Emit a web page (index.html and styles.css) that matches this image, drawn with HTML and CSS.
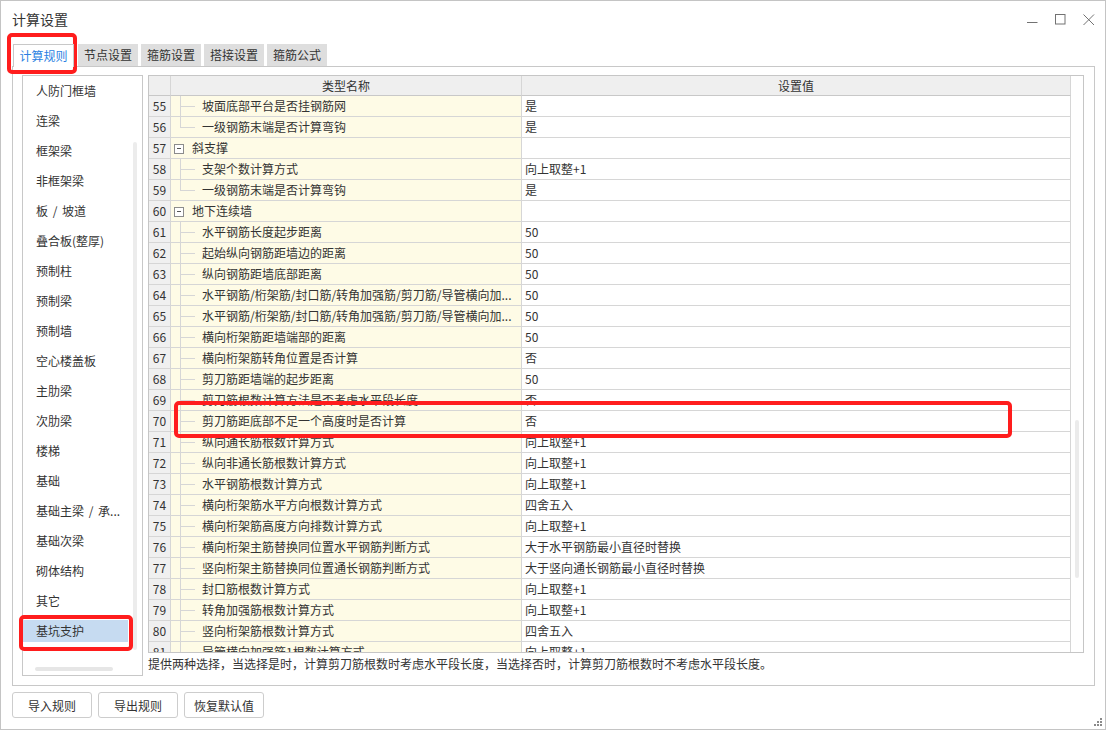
FILE: index.html
```html
<!DOCTYPE html>
<html lang="zh-CN">
<head>
<meta charset="utf-8">
<title>计算设置</title>
<link rel="stylesheet" href="styles.css">
</head>
<body>
<div class="window">
  <div class="titlebar">
    <span class="title">计算设置</span>
    <div class="controls">
      <svg class="ctl" width="12" height="12" viewBox="0 0 12 12"><path d="M0 8.5H10.5"/></svg>
      <svg class="ctl" width="12" height="12" viewBox="0 0 12 12"><rect x="0.5" y="0.5" width="9.5" height="9.5"/></svg>
      <svg class="ctl" width="12" height="12" viewBox="0 0 12 12"><path d="M0.5 0.5L11 11M11 0.5L0.5 11"/></svg>
    </div>
  </div>

  <div class="tabs">
    <div class="tab active">计算规则</div>
    <div class="tab">节点设置</div>
    <div class="tab">箍筋设置</div>
    <div class="tab">搭接设置</div>
    <div class="tab">箍筋公式</div>
  </div>

  <div class="panel">
    <div class="list">
      <div class="list-items">
        <div class="item">人防门框墙</div>
        <div class="item">连梁</div>
        <div class="item">框架梁</div>
        <div class="item">非框架梁</div>
        <div class="item">板 / 坡道</div>
        <div class="item">叠合板(整厚)</div>
        <div class="item">预制柱</div>
        <div class="item">预制梁</div>
        <div class="item">预制墙</div>
        <div class="item">空心楼盖板</div>
        <div class="item">主肋梁</div>
        <div class="item">次肋梁</div>
        <div class="item">楼梯</div>
        <div class="item">基础</div>
        <div class="item">基础主梁 / 承...</div>
        <div class="item">基础次梁</div>
        <div class="item">砌体结构</div>
        <div class="item">其它</div>
        <div class="item selected">基坑支护</div>
      </div>
      <div class="list-vthumb"></div>
      <div class="list-hthumb"></div>
    </div>

    <div class="right">
      <div class="grid">
        <div class="grid-body">
          <div class="row head">
            <div class="cell num"></div>
            <div class="cell name">类型名称</div>
            <div class="cell val">设置值</div>
          </div>
          <div class="row"><div class="cell num">55</div><div class="cell name c">坡面底部平台是否挂钢筋网</div><div class="cell val">是</div></div>
          <div class="row"><div class="cell num">56</div><div class="cell name l">一级钢筋末端是否计算弯钩</div><div class="cell val">是</div></div>
          <div class="row"><div class="cell num">57</div><div class="cell name g"><span class="box"></span>斜支撑</div><div class="cell val"></div></div>
          <div class="row"><div class="cell num">58</div><div class="cell name c">支架个数计算方式</div><div class="cell val">向上取整+1</div></div>
          <div class="row"><div class="cell num">59</div><div class="cell name l">一级钢筋末端是否计算弯钩</div><div class="cell val">是</div></div>
          <div class="row"><div class="cell num">60</div><div class="cell name g"><span class="box"></span>地下连续墙</div><div class="cell val"></div></div>
          <div class="row"><div class="cell num">61</div><div class="cell name c">水平钢筋长度起步距离</div><div class="cell val">50</div></div>
          <div class="row"><div class="cell num">62</div><div class="cell name c">起始纵向钢筋距墙边的距离</div><div class="cell val">50</div></div>
          <div class="row"><div class="cell num">63</div><div class="cell name c">纵向钢筋距墙底部距离</div><div class="cell val">50</div></div>
          <div class="row"><div class="cell num">64</div><div class="cell name c">水平钢筋/桁架筋/封口筋/转角加强筋/剪刀筋/导管横向加...</div><div class="cell val">50</div></div>
          <div class="row"><div class="cell num">65</div><div class="cell name c">水平钢筋/桁架筋/封口筋/转角加强筋/剪刀筋/导管横向加...</div><div class="cell val">50</div></div>
          <div class="row"><div class="cell num">66</div><div class="cell name c">横向桁架筋距墙端部的距离</div><div class="cell val">50</div></div>
          <div class="row"><div class="cell num">67</div><div class="cell name c">横向桁架筋转角位置是否计算</div><div class="cell val">否</div></div>
          <div class="row"><div class="cell num">68</div><div class="cell name c">剪刀筋距墙端的起步距离</div><div class="cell val">50</div></div>
          <div class="row"><div class="cell num">69</div><div class="cell name c">剪刀筋根数计算方法是否考虑水平段长度</div><div class="cell val">否</div></div>
          <div class="row"><div class="cell num">70</div><div class="cell name c">剪刀筋距底部不足一个高度时是否计算</div><div class="cell val">否</div></div>
          <div class="row"><div class="cell num">71</div><div class="cell name c">纵向通长筋根数计算方式</div><div class="cell val">向上取整+1</div></div>
          <div class="row"><div class="cell num">72</div><div class="cell name c">纵向非通长筋根数计算方式</div><div class="cell val">向上取整+1</div></div>
          <div class="row"><div class="cell num">73</div><div class="cell name c">水平钢筋根数计算方式</div><div class="cell val">向上取整+1</div></div>
          <div class="row"><div class="cell num">74</div><div class="cell name c">横向桁架筋水平方向根数计算方式</div><div class="cell val">四舍五入</div></div>
          <div class="row"><div class="cell num">75</div><div class="cell name c">横向桁架筋高度方向排数计算方式</div><div class="cell val">向上取整+1</div></div>
          <div class="row"><div class="cell num">76</div><div class="cell name c">横向桁架主筋替换同位置水平钢筋判断方式</div><div class="cell val">大于水平钢筋最小直径时替换</div></div>
          <div class="row"><div class="cell num">77</div><div class="cell name c">竖向桁架主筋替换同位置通长钢筋判断方式</div><div class="cell val">大于竖向通长钢筋最小直径时替换</div></div>
          <div class="row"><div class="cell num">78</div><div class="cell name c">封口筋根数计算方式</div><div class="cell val">向上取整+1</div></div>
          <div class="row"><div class="cell num">79</div><div class="cell name c">转角加强筋根数计算方式</div><div class="cell val">向上取整+1</div></div>
          <div class="row"><div class="cell num">80</div><div class="cell name c">竖向桁架筋根数计算方式</div><div class="cell val">四舍五入</div></div>
          <div class="row"><div class="cell num">81</div><div class="cell name c">导管横向加强筋1根数计算方式</div><div class="cell val">向上取整+1</div></div>
        </div>
        <div class="vscroll"><div class="vscroll-thumb"></div></div>
      </div>
      <div class="desc">提供两种选择，当选择是时，计算剪刀筋根数时考虑水平段长度，当选择否时，计算剪刀筋根数时不考虑水平段长度。</div>
    </div>
  </div>

  <div class="buttons">
    <button class="btn">导入规则</button>
    <button class="btn">导出规则</button>
    <button class="btn">恢复默认值</button>
  </div>

  <svg class="grip" width="8" height="8" viewBox="0 0 8 8">
    <rect x="6" y="0" width="2" height="2"/>
    <rect x="3" y="3" width="2" height="2"/>
    <rect x="6" y="3" width="2" height="2"/>
    <rect x="0" y="6" width="2" height="2"/>
    <rect x="3" y="6" width="2" height="2"/>
    <rect x="6" y="6" width="2" height="2"/>
  </svg>

  <div class="mark mark-tab"></div>
  <div class="mark mark-item"></div>
  <div class="mark mark-row"></div>
</div>
</body>
</html>
```

FILE: styles.css
```css
* { box-sizing: border-box; }

html, body {
  margin: 0;
  padding: 0;
}

body {
  width: 1106px;
  height: 730px;
  overflow: hidden;
  background: #fff;
  font-family: "Noto Sans CJK SC", "Noto Sans", "Liberation Sans", sans-serif;
  font-size: 12px;
  color: #333;
}

.window {
  position: relative;
  width: 1106px;
  height: 730px;
  border: 1px solid #c4c4c4;
  background: #fff;
  display: flex;
  flex-direction: column;
}

/* title bar */
.titlebar {
  height: 37px;
  flex: none;
  display: flex;
  justify-content: space-between;
  padding: 0 10px 0 11px;
}

.title {
  font-size: 14px;
  line-height: 37px;
  color: #333;
}

.controls {
  display: flex;
  gap: 16px;
  padding-top: 13px;
}

.ctl {
  display: block;
  stroke: #727272;
  stroke-width: 1;
  fill: none;
}

/* tabs */
.tabs {
  flex: none;
  display: flex;
  gap: 3px;
  height: 22px;
  margin: 6px 0 0 12px;
  position: relative;
  z-index: 1;
}

.tab {
  width: 60px;
  height: 22px;
  background: #dedede;
  line-height: 22px;
  text-align: center;
  color: #333;
}

.tab.active {
  width: 61px;
  height: 23px;
  margin-right: 1px;
  background: #fff;
  color: #2b7fe2;
  border: 1px solid #c8c8c8;
  border-bottom: none;
  line-height: 21px;
}

/* panel */
.panel {
  flex: none;
  height: 620px;
  margin: 0 10px 0 11px;
  border: 1px solid #c8c8c8;
  padding: 8px 9px 9px 9px;
  display: flex;
  gap: 5px;
}

/* left list */
.list {
  position: relative;
  width: 121px;
  height: 601px;
  border: 1px solid #c8c8c8;
  overflow: hidden;
}

.list-items {
  display: flex;
  flex-direction: column;
  gap: 8px;
  padding-top: 4px;
}

.item {
  width: 105px;
  height: 22px;
  line-height: 22px;
  padding: 0 2px 0 13px;
  white-space: nowrap;
  overflow: hidden;
  word-spacing: 2px;
  color: #333;
}

.item.selected {
  background: #c6dbf1;
}

.list-vthumb {
  position: absolute;
  left: 110px;
  top: 66px;
  width: 4px;
  height: 508px;
  border-radius: 2px;
  background: #ececec;
}

.list-hthumb {
  position: absolute;
  left: 12px;
  top: 591px;
  width: 78px;
  height: 4px;
  border-radius: 2px;
  background: #e6e6e6;
}

/* right side */
.right {
  width: 936px;
  display: flex;
  flex-direction: column;
}

.grid {
  height: 578px;
  flex: none;
  border: 1px solid #c6c6c6;
  display: flex;
  overflow: hidden;
}

.grid-body {
  width: 922px;
  flex: none;
  overflow: hidden;
}

.row {
  display: grid;
  grid-template-columns: 22px 351px 549px;
  height: 21px;
}

.cell {
  border-right: 1px solid #d6d6d6;
  border-bottom: 1px solid #d6d6d6;
  line-height: 20px;
  white-space: nowrap;
  overflow: hidden;
  color: #333;
}

.row.head {
  height: 20px;
}

.row.head .cell {
  background: #efefef;
  line-height: 19px;
  text-align: center;
  border-bottom-color: #c8c8c8;
  padding: 0;
}

.cell.num {
  background: #f0f0f0;
  text-align: center;
}

.cell.name {
  background: #fefbe6;
  padding: 0 2px 0 31px;
}

.cell.name.c {
  background:
    linear-gradient(#d6d6d6, #d6d6d6) 9px 0 / 1px 100% no-repeat,
    linear-gradient(#d6d6d6, #d6d6d6) 9px 10px / 15px 1px no-repeat,
    #fefbe6;
}

.cell.name.l {
  background:
    linear-gradient(#d6d6d6, #d6d6d6) 9px 0 / 1px 10px no-repeat,
    linear-gradient(#d6d6d6, #d6d6d6) 9px 10px / 15px 1px no-repeat,
    #fefbe6;
}

.cell.name.g {
  display: flex;
  align-items: center;
  padding-left: 3px;
}

.box {
  flex: none;
  width: 10px;
  height: 10px;
  margin: 1px 8px 0 0;
  border: 1px solid #8c8c8c;
  background: linear-gradient(#555, #555) center / 4px 1px no-repeat, #fff;
}

.cell.val {
  background: #fff;
  padding: 0 4px 0 3px;
}

.vscroll {
  position: relative;
  width: 12px;
  flex: none;
  background: #fff;
}

.vscroll-thumb {
  position: absolute;
  left: 4px;
  top: 344px;
  width: 4px;
  height: 158px;
  border-radius: 2px;
  background: #ebebeb;
}

.desc {
  height: 23px;
  line-height: 22px;
  white-space: nowrap;
  color: #333;
}

/* buttons */
.buttons {
  flex: none;
  display: flex;
  gap: 6px;
  margin-top: 6px;
  padding-left: 11px;
}

.btn {
  width: 80px;
  height: 26px;
  border: 1px solid #cdcdcd;
  border-radius: 3px;
  background: #fff;
  font-family: inherit;
  font-size: 12px;
  color: #333;
  padding: 0;
}

.grip {
  position: absolute;
  right: 3px;
  bottom: 3px;
  fill: #8a8a8a;
}

/* red annotation marks */
.mark {
  position: absolute;
  border: 4px solid #ff1d1d;
  border-radius: 5px;
  pointer-events: none;
}

.mark-tab {
  left: 6px;
  top: 32px;
  width: 70px;
  height: 41px;
}

.mark-item {
  left: 18px;
  top: 614px;
  width: 114px;
  height: 36px;
}

.mark-row {
  left: 173px;
  top: 400px;
  width: 838px;
  height: 37px;
}
```
